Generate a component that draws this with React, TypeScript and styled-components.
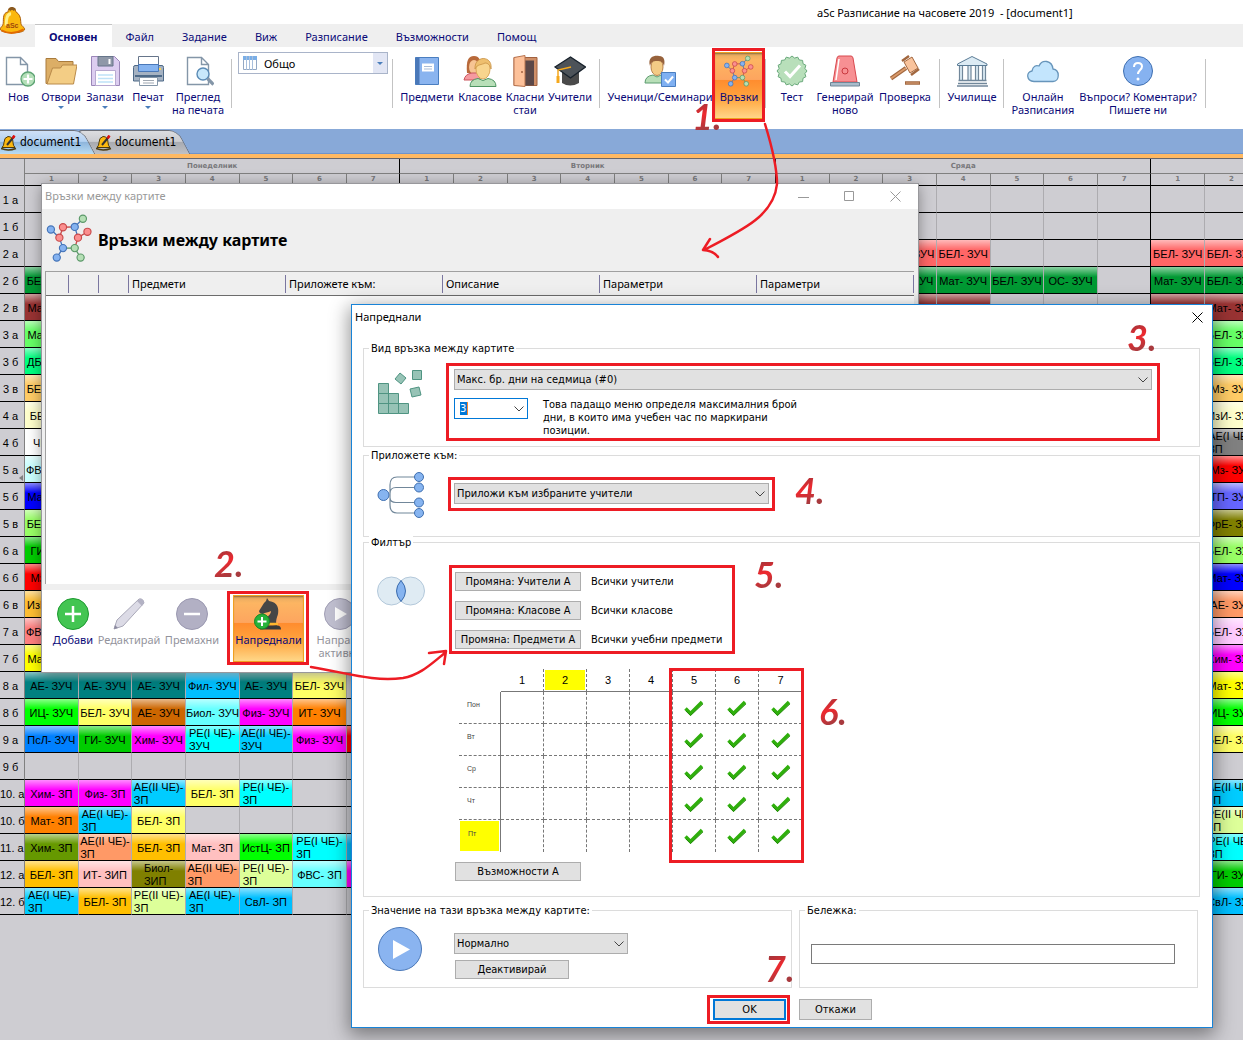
import React from "react";
import styled, { createGlobalStyle, css } from "styled-components";

const ui = `"Noto Sans", "Open Sans", sans-serif`;
const tahoma = `"DejaVu Sans Condensed", "DejaVu Sans", sans-serif`;
const arial = `"Liberation Sans", Arial, sans-serif`;
const navy = "#0a0a78";
const red = "#ed1c24";

const GlobalStyle = createGlobalStyle`
  *, *::before, *::after { box-sizing: border-box; }
  body { margin: 0; font-family: ${ui}; font-size: 11px; line-height: 13px; color: #000; }
  button, input, select { font: inherit; color: inherit; margin: 0; }
`;

/* ---------- application frame ---------- */

const Frame = styled.div`
  position: relative;
  display: flex;
  flex-direction: column;
  min-height: 100vh;
  overflow: hidden;
  background: #cecdd2;
`;

const TitleBar = styled.header`
  height: 24px;
  padding: 4px 0 0 817px;
  background: #fff;
  line-height: 18px;
  white-space: pre;
`;

const AppLogo = styled.span`
  position: absolute;
  left: 0;
  top: 7px;
`;

const MenuBar = styled.nav`
  display: flex;
  height: 23px;
  padding-left: 35px;
  background: #efefef;
  color: ${navy};
`;

const MenuTab = styled.button<{ $active?: boolean }>`
  border: 0;
  border-top: 1px solid ${(p) => (p.$active ? "#c4c4c4" : "transparent")};
  padding: 0 14px;
  background: ${(p) => (p.$active ? "#fff" : "transparent")};
  font-weight: ${(p) => (p.$active ? 700 : 400)};
  white-space: nowrap;
`;

const Ribbon = styled.div`
  display: flex;
  height: 82px;
  background: #fff;
  color: ${navy};
`;

const Divider = styled.span<{ $w: number }>`
  flex: none;
  width: ${(p) => p.$w}px;
  height: 49px;
  margin-top: 12px;
  background: linear-gradient(#c3c3c3, #c3c3c3) center / 1px 100% no-repeat;
`;

const pressed = css`
  background: linear-gradient(#e0a860, #fdb562 12%, #fda55f 41%, #ff8c2e 42%, #ffa640 70%, #ffd98c);
  box-shadow: inset 0 0 0 1px #f0a020, inset 0 2px 2px #8a6a3c;
`;

const ToolButton = styled.button<{ $w: number; $pressed?: boolean; $dim?: boolean }>`
  flex: none;
  display: flex;
  flex-direction: column;
  align-items: center;
  gap: 3px;
  width: ${(p) => p.$w}px;
  height: 67px;
  margin: 5px 0 0;
  padding: 3px 0 0;
  border: 0;
  background: none;
  color: ${(p) => (p.$dim ? "#93939c" : navy)};
  text-align: center;
  white-space: pre;
  svg { flex: none; display: block; }
  ${(p) => p.$pressed && pressed}
`;

const DropMark = styled.i`
  border: 3px solid transparent;
  border-top-color: #4a7ebb;
`;

const ViewPicker = styled.label`
  flex: none;
  display: flex;
  align-items: center;
  width: 150px;
  height: 22px;
  margin-top: 5px;
  padding-left: 4px;
  border: 1px solid #a9b4c9;
  background: linear-gradient(90deg, #fff 134px, #e2e6f4 134px);
  color: #000;
`;

const ViewSelect = styled.select`
  flex: 1;
  height: 20px;
  padding: 0 0 0 7px;
  border: 0;
  outline: 0;
  appearance: none;
  background: none;
`;

const PickerMark = styled(DropMark)`
  margin: 3px 4px 0 0;
`;

const DocStrip = styled.div`
  display: flex;
  height: 30px;
  border-bottom: 1px solid #66666c;
  background: linear-gradient(#88a9d8 24px, #6d93cc 24px 25px, #ffb962 25px);
  font-family: ${tahoma};
  font-size: 12px;
`;

const DocTab = styled.button<{ $active?: boolean }>`
  position: relative;
  z-index: ${(p) => (p.$active ? 2 : 1)};
  display: flex;
  align-items: center;
  gap: 3px;
  width: 95px;
  height: 25px;
  padding: 2px 0 0 1px;
  border: 0;
  background: none;
  svg { flex: none; }
  &::before {
    content: "";
    position: absolute;
    z-index: -1;
    inset: 1px 6px 0 -12px;
    border: 1px solid #6c7079;
    border-bottom: 0;
    border-radius: 5px 9px 0 0;
    transform: skewX(28deg);
    background: ${(p) =>
      p.$active
        ? "linear-gradient(#cfe0f6, #b4d2f2 45%, #8fb6dc 50%, #b9dcf4)"
        : "linear-gradient(#dcdde0, #cbccd0 45%, #a9abb1 50%, #bfc1c6)"};
  }
`;

/* ---------- timetable ---------- */

const Timetable = styled.table`
  width: 1527px;
  table-layout: fixed;
  border-collapse: separate;
  border-spacing: 0;
  font-family: ${arial};
`;

const LabelCol = styled.col`
  width: 25px;
`;

const DayHead = styled.th`
  height: 15px;
  padding: 0;
  border-right: 1px solid #000;
  border-bottom: 1px solid #808080;
  color: #77777a;
  font: 700 7px/14px "DejaVu Sans", sans-serif;
`;

const HourHead = styled.th<{ $last?: boolean }>`
  height: 12px;
  padding: 0;
  border-right: 1px solid ${(p) => (p.$last ? "#000" : "#808080")};
  border-bottom: 1px solid #000;
  color: #77777a;
  font: 700 7px/11px "DejaVu Sans", sans-serif;
`;

const Corner = styled.th`
  padding: 0;
  border-right: 1px solid #808080;
  border-bottom: 1px solid #000;
`;

const ClassHead = styled.th<{ $mark?: boolean }>`
  position: relative;
  height: 27px;
  padding: 2px 3px 0 0;
  border-right: 1px solid #808080;
  border-bottom: 1px solid #000;
  font-size: 11px;
  font-weight: 400;
  white-space: nowrap;
  &::after {
    content: "";
    display: ${(p) => (p.$mark ? "block" : "none")};
    position: absolute;
    right: 1px;
    bottom: 1px;
    border: 3px solid transparent;
    border-right: 4px solid #808080;
    border-left: 0;
  }
`;

const Slot = styled.td<{ $fill?: string; $last?: boolean }>`
  height: 27px;
  padding: 0;
  overflow: hidden;
  border-right: 1px solid ${(p) => (p.$last ? "#000" : "#adacb0")};
  border-bottom: 1px solid #000;
  background: ${(p) =>
    p.$fill ? `linear-gradient(rgba(255,255,255,.55), rgba(255,255,255,0) 10px), ${p.$fill}` : "none"};
  text-align: center;
  white-space: pre;
`;

const SlotText = styled.span`
  display: inline-block;
  margin: 1px 0 -1px;
  vertical-align: middle;
  text-align: left;
`;

type Card = [string, string];
type Row = { name: string; mon?: (Card | null)[]; wed?: (Card | null)[]; thu?: (Card | null)[] };

const z = (s: string) => `${s}- ЗУЧ`;
const p = (s: string) => `${s}- ЗП`;
const zp = (s: string) => `${s}-\nЗП`;

const rows: Row[] = [
  { name: "1 а" },
  { name: "1 б" },
  {
    name: "2 а",
    wed: [null, null, [z("БЕЛ"), "#ff6666"], [z("БЕЛ"), "#ff6666"]],
    thu: [[z("БЕЛ"), "#ff6666"], [z("БЕЛ"), "#ff6666"]],
  },
  {
    name: "2 б",
    mon: [[z("БЕЛ"), "#009933"]],
    wed: [null, null, [z("Мат"), "#009933"], [z("Мат"), "#009933"], [z("БЕЛ"), "#009933"], [z("ОС"), "#009933"]],
    thu: [[z("Мат"), "#009933"], [z("БЕЛ"), "#009933"]],
  },
  {
    name: "2 в",
    mon: [[z("Мат"), "#993333"]],
    wed: [null, null, [z("Мат"), "#993333"], [z("Мат"), "#993333"]],
    thu: [[z("Мат"), "#993333"], [z("Мат"), "#993333"]],
  },
  { name: "3 а", mon: [[z("Мат"), "#66ff66"]], thu: [null, [z("БЕЛ"), "#66ff66"]] },
  { name: "3 б", mon: [[z("ДБТ"), "#00ff80"]], thu: [null, [z("БЕЛ"), "#00ff80"]] },
  { name: "3 в", mon: [[z("БЕЛ"), "#ffcc66"]], thu: [null, [z("Мз"), "#ffcc66"]] },
  { name: "4 а", mon: [[p("БЕЛ"), "#ffffcc"]], thu: [null, [z("ИзИ"), "#ffffcc"]] },
  { name: "4 б", mon: [[p("ЧП"), "#ffffff"]], thu: [null, [zp("АЕ(I ЧЕ)"), "#808080"]] },
  { name: "5 а", mon: [[z("ФВС"), "#ccffff"]], thu: [null, [z("Мз"), "#ff0000"]] },
  { name: "5 б", mon: [[z("Мат"), "#0000ff"]], thu: [null, [z("ТП"), "#6666ff"]] },
  { name: "5 в", mon: [[z("БЕЛ"), "#99ff66"]], thu: [null, [z("ФрЕ"), "#808000"]] },
  { name: "6 а", mon: [[z("ГИ"), "#00cc00"]], thu: [null, [z("БЕЛ"), "#99ff66"]] },
  { name: "6 б", mon: [[z("Мз"), "#ff0000"]], thu: [null, [z("Мат"), "#0000ff"]] },
  { name: "6 в", mon: [[z("ИзИ"), "#ffbf33"]], thu: [null, [z("АЕ"), "#ff9966"]] },
  { name: "7 а", mon: [[z("ФВС"), "#ff8080"]], thu: [null, [z("БЕЛ"), "#ffccff"]] },
  { name: "7 б", mon: [[z("Мат"), "#ffff00"]], thu: [null, [z("Хим"), "#ff00ff"]] },
  {
    name: "8 а",
    mon: [[z("АЕ"), "#008080"], [z("АЕ"), "#008080"], [z("АЕ"), "#008080"], [z("Фил"), "#00bfff"], [z("АЕ"), "#008080"], [z("БЕЛ"), "#ffff66"]],
    thu: [null, [z("Мат"), "#ffff00"]],
  },
  {
    name: "8 б",
    mon: [[z("ИЦ"), "#00ff00"], [z("БЕЛ"), "#ffff66"], [z("АЕ"), "#cc6600"], [z("Биол"), "#66ffff"], [z("Физ"), "#ff00ff"], [z("ИТ"), "#ff8000"]],
    thu: [null, [z("ИЦ"), "#00ff00"]],
  },
  {
    name: "9 а",
    mon: [[z("ПсЛ"), "#0080ff"], [z("ГИ"), "#00cc00"], [z("Хим"), "#ff00ff"], ["РЕ(I ЧЕ)-\nЗУЧ", "#00ffff"], ["АЕ(II ЧЕ)-\nЗУЧ", "#00ccff"], [z("Физ"), "#ff00ff"], [z("Мз"), "#ff0000"]],
    thu: [null, [z("БЕЛ"), "#ffff66"]],
  },
  { name: "9 б" },
  {
    name: "10. а",
    mon: [[p("Хим"), "#ff00ff"], [p("Физ"), "#ff00ff"], [zp("АЕ(II ЧЕ)"), "#00ccff"], [p("БЕЛ"), "#ffff66"], [zp("РЕ(I ЧЕ)"), "#00ffff"]],
    thu: [null, [zp("АЕ(II ЧЕ)"), "#00ccff"]],
  },
  {
    name: "10. б",
    mon: [[p("Мат"), "#ff8000"], [zp("АЕ(I ЧЕ)"), "#00ccff"], [p("БЕЛ"), "#ffff66"]],
    thu: [null, [zp("РЕ(II ЧЕ)"), "#ddff99"]],
  },
  {
    name: "11. а",
    mon: [[p("Хим"), "#669900"], [zp("АЕ(II ЧЕ)"), "#ff9966"], [p("БЕЛ"), "#ffbf00"], [p("Мат"), "#ffc0c0"], [p("ИстЦ"), "#00ff00"], [zp("РЕ(I ЧЕ)"), "#00ffff"], [p("СвЛ"), "#00bfff"]],
    thu: [null, [zp("РЕ(I ЧЕ)"), "#00ffff"]],
  },
  {
    name: "12. а",
    mon: [[p("БЕЛ"), "#ffbf00"], ["ИТ- ЗИП", "#ffc0c0"], ["Биол-\nЗИП", "#808000"], [zp("АЕ(II ЧЕ)"), "#ff9966"], [zp("РЕ(I ЧЕ)"), "#ddff99"], [p("ФВС"), "#66ffff"], [p("Физ"), "#ff00ff"]],
    thu: [null, [z("ГИ"), "#00cc00"]],
  },
  {
    name: "12. б",
    mon: [[zp("АЕ(I ЧЕ)"), "#00ccff"], [p("БЕЛ"), "#ffbf00"], [zp("РЕ(II ЧЕ)"), "#ddff99"], [zp("АЕ(I ЧЕ)"), "#00ccff"], [p("СвЛ"), "#00bfff"]],
    thu: [null, [z("СвЛ"), "#00bfff"]],
  },
];

const days = ["Понеделник", "Вторник", "Сряда", "Четвъртък"];
const hours = [1, 2, 3, 4, 5, 6, 7];

/* ---------- windows ---------- */

const LinksWindow = styled.section`
  position: absolute;
  left: 42px;
  top: 184px;
  width: 876px;
  background: #efefef;
  box-shadow: 0 0 0 1px #98989c, 0 2px 14px rgba(0, 0, 0, 0.4);
`;

const WindowTitle = styled.div<{ $inactive?: boolean }>`
  display: flex;
  align-items: center;
  height: 25px;
  padding: 0 ${(p) => (p.$inactive ? 15 : 7)}px 0 3px;
  background: #fff;
  color: ${(p) => (p.$inactive ? "#999" : "#000")};
`;

const WindowName = styled.span`
  flex: 1;
  padding-bottom: 2px;
`;

const WindowButton = styled.button`
  display: grid;
  place-items: center;
  width: 16px;
  height: 16px;
  margin-left: 30px;
  padding: 0;
  border: 0;
  background: none;
`;

const LinksHeader = styled.div`
  display: flex;
  align-items: center;
  gap: 5px;
  height: 62px;
  padding: 0 0 4px 4px;
`;

const LinksHeading = styled.h1`
  margin: 0;
  padding-top: 4px;
  font-size: 16px;
  line-height: 20px;
`;

const LinksTable = styled.table`
  width: 869px;
  margin-left: 3px;
  table-layout: fixed;
  border-collapse: separate;
  border-spacing: 0;
  border: 1px solid #a0a0a0;
  border-width: 1px 0 0 1px;
`;

const LinksTh = styled.th<{ $w?: number }>`
  width: ${(p) => p.$w ?? 157}px;
  height: 24px;
  padding: 0 0 0 3px;
  border-bottom: 1px solid #6c6c6c;
  background: linear-gradient(#7a76a0, #7a76a0) right center / 1px 18px no-repeat, #efefef;
  font-weight: 400;
  text-align: left;
`;

const LinksEmpty = styled.td`
  height: 288px;
  background: #fff;
`;

const LinksTools = styled.div`
  display: flex;
  height: 82px;
  margin-top: 6px;
  padding-left: 7px;
  overflow: hidden;
  background: #fff;
`;

const AdvancedWindow = styled.section`
  position: absolute;
  left: 351px;
  top: 304px;
  width: 862px;
  border: 1px solid #1883d7;
  background: #fff;
  box-shadow: 0 5px 18px 2px rgba(0, 0, 0, 0.42);
`;

const AdvancedBody = styled.form`
  display: flex;
  flex-direction: column;
  padding: 12px 12px 7px 11px;
  font-family: ${tahoma};
`;

const Group = styled.fieldset<{ $gap?: number }>`
  min-width: 0;
  margin: ${(p) => p.$gap ?? 0}px 0 0;
  padding: 0;
  border: 1px solid #dcdcdc;
`;

const Legend = styled.legend`
  margin-left: 5px;
  padding: 0 2px;
  background: #fff;
`;

const GroupBody = styled.div<{ $top: number; $bottom: number }>`
  display: grid;
  grid-template-columns: 77px 1fr;
  padding: ${(p) => p.$top}px 47px ${(p) => p.$bottom}px 13px;
`;

const Stack = styled.div<{ $gap: number; $top?: number }>`
  display: flex;
  flex-direction: column;
  align-items: flex-start;
  gap: ${(p) => p.$gap}px;
  padding-top: ${(p) => p.$top ?? 0}px;
`;

const Line = styled.div<{ $gap: number }>`
  display: flex;
  gap: ${(p) => p.$gap}px;
`;

const SelectBox = styled.div<{ $w?: number; $edit?: boolean }>`
  display: flex;
  align-items: center;
  width: ${(p) => (p.$w ? `${p.$w}px` : "100%")};
  height: 21px;
  padding: 0 3px 0 2px;
  border: 1px solid ${(p) => (p.$edit ? "#0078d7" : "#adadad")};
  background: ${(p) => (p.$edit ? "#fff" : "#e1e1e1")};
  svg { flex: none; }
`;

const SelectField = styled.select`
  flex: 1;
  min-width: 0;
  height: 19px;
  padding: 0;
  border: 0;
  outline: 0;
  appearance: none;
  background: none;
`;

const LimitInput = styled.input`
  width: 8px;
  height: 13px;
  margin: 0 auto 0 3px;
  padding: 0;
  border: 0;
  border-right: 1px solid #ff8728;
  outline: 0;
  background: #0078d7;
  color: #fff;
`;

const Hint = styled.p`
  width: 262px;
  margin: 0;
`;

const PushButton = styled.button<{ $w: number; $default?: boolean }>`
  width: ${(p) => p.$w}px;
  height: ${(p) => (p.$w < 80 ? 21 : 19)}px;
  padding: 0;
  border: ${(p) => (p.$default ? "2px solid #0078d7" : "1px solid #adadad")};
  background: #e1e1e1;
`;

const FilterLine = styled.div`
  display: flex;
  align-items: center;
  gap: 10px;
  padding-left: 1px;
`;

const Availability = styled.table`
  width: 343px;
  margin: 20px 0 0 5px;
  table-layout: fixed;
  border-collapse: separate;
  border-spacing: 0;
  font-family: ${arial};
`;

const AvCorner = styled.td`
  width: 42px;
  height: 23px;
  padding: 0;
`;

const yellow = css`
  background: #ff0 content-box;
`;

const AvHour = styled.th<{ $on?: boolean; $last?: boolean }>`
  height: 23px;
  padding: 1px;
  border-right: ${(p) => (p.$last ? "0" : "1px dashed #777")};
  border-bottom: 1px solid #777;
  font-size: 11px;
  font-weight: 400;
  ${(p) => p.$on && yellow}
`;

const AvDay = styled.th<{ $on?: boolean; $last?: boolean }>`
  height: 32px;
  padding: ${(p) => (p.$on ? 1 : 0)}px;
  border-right: 1px solid #777;
  border-bottom: ${(p) => (p.$last ? "0" : "1px dashed #777")};
  color: #444;
  font-size: 7px;
  font-weight: 400;
  line-height: 9px;
  text-align: left;
  vertical-align: top;
  ${(p) => p.$on && yellow}
`;

const DayName = styled.span`
  display: block;
  padding: 8px 0 0 8px;
`;

const AvCell = styled.td<{ $bottom?: boolean; $right?: boolean }>`
  height: 32px;
  padding: 0;
  border-right: ${(p) => (p.$right ? "0" : "1px dashed #777")};
  border-bottom: ${(p) => (p.$bottom ? "0" : "1px dashed #777")};
  text-align: center;
  svg { display: block; margin: 0 auto; }
`;

const AvFooter = styled.div`
  padding: 10px 0 0 1px;
`;

const TwoColumns = styled.div<{ $gap: number }>`
  display: grid;
  grid-template-columns: 429px 1fr;
  column-gap: 7px;
  margin-top: ${(p) => p.$gap}px;
  padding-right: 2px;
`;

const NoteInput = styled.input`
  display: block;
  width: calc(100% - 33px);
  height: 20px;
  margin: 27px 0 0 11px;
  border: 1px solid #7a7a7a;
  background: #fff;
`;

const RightSide = styled.div`
  display: flex;
  justify-content: flex-end;
  padding-right: 6px;
`;

/* ---------- hand-drawn marks ---------- */

const Marks = styled.div`
  position: absolute;
  inset: 0;
  pointer-events: none;
`;

const MarkBox = styled.span<{ $x: number; $y: number; $w: number; $h: number }>`
  position: absolute;
  left: ${(p) => p.$x}px;
  top: ${(p) => p.$y}px;
  width: ${(p) => p.$w}px;
  height: ${(p) => p.$h}px;
  border: 3px solid ${red};
`;

const MarkNumber = styled.span<{ $x: number; $y: number }>`
  position: absolute;
  left: ${(p) => p.$x}px;
  top: ${(p) => p.$y}px;
  background: linear-gradient(160deg, #a4353a 20%, #f0282e 45%, #a83a3e 75%);
  background-clip: text;
  color: transparent;
  font: italic 700 36px/40px Lato, sans-serif;
`;

const boxes = [
  [712, 48, 53, 74],
  [227, 591, 82, 74],
  [446, 363, 714, 78],
  [448, 477, 327, 34],
  [449, 565, 286, 89],
  [669, 668, 135, 195],
  [707, 995, 83, 29],
];

const numbers: [string, number, number][] = [
  ["1.", 692, 96],
  ["2.", 214, 543],
  ["3.", 1127, 317],
  ["4.", 795, 470],
  ["5.", 754, 554],
  ["6.", 819, 691],
  ["7.", 765, 948],
];

/* ---------- icons ---------- */

const Svg = ({ w = 32, h = 32, box, children }: { w?: number; h?: number; box?: string; children: React.ReactNode }) => (
  <svg width={w} height={h} viewBox={box ?? `0 0 ${w} ${h}`} fill="none" aria-hidden="true">
    {children}
  </svg>
);

const IconNew = () => (
  <Svg>
    <path d="M3.500 2.500h14l7 7v20h-21zM17.500 2.500v7h7" fill="#fff" stroke="#8496a8" strokeWidth="1.4" />
    <circle cx="25" cy="24" r="7" fill="#b4dfb8" stroke="#5ea474" strokeWidth="1.3" />
    <path d="M25 19.500v9M20.500 24h9" stroke="#fff" strokeWidth="2.200" />
  </Svg>
);

const IconOpen = () => (
  <Svg>
    <path d="M1 28.500V3.500h10l2.500 3H28v22z" fill="#dcae66" stroke="#a97b3c" />
    <path d="M2 29 7.500 13h8l2-3H32l-3.500 19z" fill="#f3cd85" stroke="#b98a4a" />
  </Svg>
);

const IconSave = () => (
  <Svg>
    <path d="M2.500 1.500h23l5 5v24h-28z" fill="#dccdf0" stroke="#9a86b8" />
    <path d="M9 1.500h15v9.500H9z" fill="#8f98a8" stroke="#66758a" />
    <path d="M19.500 4h2v5h-2z" fill="#fff" />
    <path d="M6.500 15.500h20v15h-20z" fill="#fff" stroke="#b7a9d0" />
    <path d="M9 20h15M9 23.500h15M9 27h15" stroke="#bfe2f7" strokeWidth="1.500" />
  </Svg>
);

const IconPrint = () => (
  <Svg>
    <path d="M6.500 13V1.500h20V13" fill="#fff" stroke="#66758a" />
    <path d="M3 10.500h27q1.500 0 1.500 2V26h-30V12.500q0-2 1.500-2z" fill="#a5b2c2" stroke="#4e6a88" />
    <path d="M6.500 9.500h20v7h-20z" fill="#86b4f0" stroke="#4a78b8" />
    <path d="M27 13h2v2h-2z" fill="#ffd34e" />
    <path d="M3 21h27" stroke="#4e6a88" strokeWidth="2" />
    <path d="M7.500 22.500h18v8h-18z" fill="#fff" stroke="#8496a8" />
    <path d="M11 25.500h11M11 28h11" stroke="#a0a8b2" />
  </Svg>
);

const IconPreview = () => (
  <Svg>
    <path d="M5.500 2.500h14l7 7v20h-21zM19.500 2.500v7h7" fill="#fff" stroke="#8496a8" strokeWidth="1.4" />
    <circle cx="21" cy="19" r="6" fill="#c8e8fb" stroke="#5b8bb5" strokeWidth="1.400" />
    <path d="m25.500 23.500 6 6" stroke="#8496a8" strokeWidth="3.200" />
  </Svg>
);

const IconGrid = () => (
  <Svg w={14} h={14}>
    <path d="M.5.5h13v13H.5z" fill="#fff" stroke="#93a8c4" />
    <path d="M0 0h14v4H0z" fill="#7aaee6" />
    <path d="M3.500 0v14M6.500 0v14M9.500 0v14" stroke="#a8bfdc" />
  </Svg>
);

const IconBook = () => (
  <Svg>
    <path d="M4.500 2.500h23v27h-23z" fill="#8ab4ef" stroke="#4a7ec0" />
    <path d="M4.500 2.500h4v27h-4z" fill="#4a78b8" />
    <path d="M11 8.500h12v8H11z" fill="#fff" />
    <path d="M13 11.500h8M13 14h8" stroke="#a9bcd8" />
  </Svg>
);

const IconPupils = () => (
  <Svg w={34}>
    <path d="M4 18C3 6 5 1 11 1s8 6 7 17z" fill="#b8693a" />
    <ellipse cx="11" cy="12" rx="5" ry="7" fill="#f6c493" />
    <path d="M1 25q1-6 8-7h8v7z" fill="#f59aa0" stroke="#c9555c" />
    <ellipse cx="20" cy="14" rx="7" ry="10" fill="#f8d58e" stroke="#dca85a" />
    <path d="M12 14C11 0 30 0 28 14c-1-4-3-6-6-6-3 2-8 1-10 6z" fill="#eebf6e" stroke="#c99346" strokeWidth=".8" />
    <path d="M7 31.500q0-7 8-8l5 2 5-2q8 1 8 8z" fill="#b8dfb8" stroke="#4e9462" />
  </Svg>
);

const IconDoor = () => (
  <Svg>
    <path d="M5 2.500h23v28H5z" fill="#cf8f68" stroke="#a2613f" />
    <path d="M11 5.500h14v25H11z" fill="#5b4848" />
    <path d="M5 2.500 16 .5v31l-11-1z" fill="#fdc19a" stroke="#b87450" />
    <circle cx="13" cy="17" r="1" fill="#a2613f" />
  </Svg>
);

const IconCap = () => (
  <Svg>
    <path d="M8 16v12q8 5 17 0V16z" fill="#4a4a4a" />
    <path d="M1 12 16.500 2 31.500 12 16.500 23z" fill="#4d5359" stroke="#17212b" strokeWidth="1.300" />
    <path d="M17 12 4 15v9" stroke="#f5a81c" strokeWidth="1.500" />
    <path d="M4 21v7" stroke="#f5a81c" strokeWidth="3" />
  </Svg>
);

const IconStudent = () => (
  <Svg>
    <path d="M1 28q0-7 8-8l4 2 4-2q5 1 6 8z" fill="#b8dfb8" stroke="#5d9c70" />
    <ellipse cx="13" cy="12" rx="6" ry="8.500" fill="#f3cb85" stroke="#b9824a" />
    <path d="M6 11C3 1 12 0 15 1c6 0 6 6 5 10-1-4-3-5-7-5s-6 1-7 5z" fill="#97623c" />
    <path d="M17.500 17.500h14v14h-14z" fill="#7fb0f2" stroke="#4a7ec0" />
    <path d="m21 24.500 3 3 5-6" stroke="#fff" strokeWidth="2" />
  </Svg>
);

const blue = ["#84b2f0", "#4373b8"];
const pink = ["#fb8f8f", "#c84a4a"];
const green = ["#b5dfb5", "#5a9868"];
const nodes: [number, number, string[]][] = [
  [153, 237, blue], [179, 262, pink], [190, 230, pink], [226, 229, blue], [251, 204, green], [236, 262, pink],
  [265, 244, pink], [226, 294, green], [244, 323, green], [190, 294, blue], [171, 323, blue],
];
const edges = [[0, 1], [1, 2], [2, 3], [3, 4], [3, 5], [5, 6], [5, 7], [7, 8], [7, 9], [9, 10], [9, 1]];

const IconLinks = ({ w, h }: { w: number; h: number }) => (
  <Svg w={w} h={h} box="138 188 144 150">
    {edges.map(([a, b]) => (
      <path key={`${a}-${b}`} d={`M${nodes[a][0]} ${nodes[a][1]}L${nodes[b][0]} ${nodes[b][1]}`} stroke={nodes[a][2][1]} strokeWidth="4" />
    ))}
    {nodes.map(([x, y, c]) => (
      <circle key={`${x}-${y}`} cx={x} cy={y} r="11" fill={c[0]} stroke={c[1]} strokeWidth="3.500" />
    ))}
  </Svg>
);

const scallops = Array.from({ length: 32 }, (_, i) => {
  const r = i % 2 ? 13.2 : 15;
  const a = (i * Math.PI) / 16;
  return `${(16 + r * Math.cos(a)).toFixed(1)},${(16 + r * Math.sin(a)).toFixed(1)}`;
}).join(" ");

const IconTest = () => (
  <Svg>
    <polygon points={scallops} fill="#b8dfba" stroke="#6aa97c" strokeLinejoin="round" />
    <path d="m9 16.500 5 5 10-11" stroke="#fff" strokeWidth="3" />
  </Svg>
);

const IconSiren = () => (
  <Svg>
    <path d="M4 27 8 3q.5-2 2-2h12q1.500 0 2 2l4 24z" fill="#f79093" stroke="#d8484e" />
    <path d="m10 4-3 21" stroke="#fff" strokeWidth="1.500" />
    <circle cx="16" cy="16" r="3" stroke="#c9393f" />
    <path d="M1.500 27.500h29v3.500h-29z" fill="#a9bccb" stroke="#6f8798" />
  </Svg>
);

const IconGavel = () => (
  <Svg>
    <path d="M17 13 2 23.500" stroke="#a2673f" strokeWidth="4" />
    <path d="M17 13 2 23.500" stroke="#d99a6b" strokeWidth="1.800" />
    <path d="m15 7 8-5 6 11-8 5z" fill="#f9c39c" stroke="#a2673f" />
    <path d="m13 6 7-5M22 20l8-6" stroke="#a2673f" strokeWidth="2.500" />
    <path d="M16 28h15" stroke="#a2673f" strokeWidth="3.500" />
    <path d="M17 28h13" stroke="#dda57c" />
  </Svg>
);

const IconSchool = () => (
  <Svg>
    <path d="M1.500 9 16 1.500 31 9v1.500H1.500z" fill="#dcebf4" stroke="#5b7c96" />
    <path d="M5 11v14M13.500 11v14M21 11v14M28 11v14" stroke="#dcebf4" strokeWidth="3" />
    <path d="M3.500 11v14M6.500 11v14M12 11v14M15 11v14M19.500 11v14M22.500 11v14M26.500 11v14M29.500 11v14" stroke="#71879a" strokeWidth="1.200" />
    <path d="M2.500 25.500h28M2 28.500h29M1 31h31" stroke="#71879a" strokeWidth="1.500" />
  </Svg>
);

const IconCloud = () => (
  <Svg>
    <path d="M7 26.500C-1 26-1 17 5 16c1-5 4-6 7-5 3-7 13-6 14 3 7 1 7 12 0 12.500z" fill="#c3e5fd" stroke="#6795bb" strokeWidth="1.300" />
  </Svg>
);

const IconHelp = () => (
  <Svg>
    <circle cx="16" cy="16" r="14.500" fill="#86b2f0" stroke="#3f6fb0" />
    <path d="M12 12q0-4 4-4t4 3.500c0 3.500-4 3.500-4 7.500" stroke="#fff" strokeWidth="2" />
    <circle cx="16" cy="24" r="1.500" fill="#fff" />
  </Svg>
);

const IconBell = ({ s }: { s: number }) => (
  <Svg w={s} h={s + 4} box="0 0 26 31">
    <path d="M12 1q4 0 4 4 5 3 5 10c0 6 4 5 4 8 0 5-25 5-25 0 0-3 3-2 3-8 0-7 1-9 5-10 0-4 2-4 4-4z" fill="#fbb80e" stroke="#a85a08" />
    <path d="M6 19c0-8 1-12 5-12" stroke="#fff08a" strokeWidth="3" />
    <path d="M1 24q11 6 23-1" stroke="#e26b00" strokeWidth="2" />
    <path d="M9 3q3-3 6 0" stroke="#8a5a20" strokeWidth="3" />
  </Svg>
);

const LogoText = styled.span`
  position: absolute;
  left: 6px;
  top: 15px;
  color: #a0480a;
  font: 700 7px/8px ${arial};
`;

const IconDocBell = () => (
  <Svg w={16} h={16}>
    <path d="M7 1.500q5 0 5 6 0 3 2 5H1q2-2 2-5 0-5 4-6z" fill="#fbb80e" stroke="#4a3a10" />
    <path d="M0 13.500q7 3 15 0" stroke="#4a3a10" strokeWidth="1.500" />
    <path d="m6 10 7-8.500" stroke="#333" strokeWidth="2" />
    <path d="m11.500 3.500 2-3" stroke="#e01010" strokeWidth="2.500" />
  </Svg>
);

const IconDisc = ({ fill, line, d, solid }: { fill: string; line: string; d: string; solid?: boolean }) => (
  <Svg>
    <circle cx="16" cy="16" r="15.500" fill={fill} stroke={line} />
    <path d={d} fill={solid ? "#fff" : "none"} stroke={solid ? "none" : "#fff"} strokeWidth="2.500" />
  </Svg>
);

const IconPencil = () => (
  <Svg>
    <path d="m1 31 3-9L26 1q4-1 5 4L10 28z" fill="#dcdbe6" stroke="#a9a8b8" />
    <path d="m24 3 3-2q4 0 4 4l-2 3z" fill="#b3b2c4" />
    <path d="m1 31 1-4 3 3z" fill="#8c8ba0" />
  </Svg>
);

const IconKnight = () => (
  <Svg>
    <path d="M12 25c-1-6 6-7 6-12-3 2-6 1-8 3-2 0-4-1-4-3l5-8 2-2 1-3 2 3c9 1 10 8 9 13-1 4-3 7-1 12z" fill="#464646" />
    <path d="M9 26h16" stroke="#ffb62e" strokeWidth="2.500" />
    <path d="M7 31.500q0-4 3-4h14q4 0 4 4z" fill="#3a3a3a" />
    <circle cx="9" cy="23.500" r="7.500" fill="#27b23a" stroke="#128a24" />
    <path d="M9 19v9M4.500 23.500h9" stroke="#fff" strokeWidth="2" />
  </Svg>
);

const IconBlocks = () => (
  <Svg w={46} h={46}>
    <g fill="#97c3b6" stroke="#4f9482">
      <path d="M1.500 14.500h10v10h-10zM1.500 24.500h10v10h-10zM11.500 24.500h10v10h-10zM1.500 34.500h10v10h-10zM11.500 34.500h10v10h-10zM21.500 34.500h10v10h-10zM35.500 1.500h9v9h-9z" />
      <path d="m23 4 6 5-5 6-6-5zM33 20l9-2 2 8-9 2z" />
    </g>
  </Svg>
);

const IconTree = () => (
  <Svg w={48} h={46}>
    <path d="M42 5H20q-7 0-7 8v20q0 8 7 8h22M42 15.500H19q-6 0-6 6v4q0 5 6 5h23" stroke="#71879a" strokeWidth="1.200" />
    <g fill="#86b4f0" stroke="#3f6fb0">
      <circle cx="6.500" cy="23" r="5.500" />
      <circle cx="42" cy="5" r="4.500" />
      <circle cx="42" cy="15.500" r="4.500" />
      <circle cx="42" cy="30.500" r="4.500" />
      <circle cx="42" cy="41" r="4.500" />
    </g>
  </Svg>
);

const IconVenn = () => (
  <Svg w={48} h={30}>
    <g fill="#dfebf3">
      <circle cx="14.500" cy="15" r="14" />
      <circle cx="33.500" cy="15" r="14" />
    </g>
    <g stroke="#b3c8da">
      <circle cx="14.500" cy="15" r="14" />
      <circle cx="33.500" cy="15" r="14" />
    </g>
    <path d="M24 4.500q9 10.500 0 21-9-10.500 0-21z" fill="#86b4f0" stroke="#3f6fb0" />
  </Svg>
);

const IconPlay = () => (
  <Svg w={46} h={44}>
    <circle cx="23" cy="22" r="21.500" fill="#8ab4f0" stroke="#4a78b8" />
    <path d="M16 13v19l17-9.500z" fill="#fff" />
  </Svg>
);

const Chevron = () => (
  <Svg w={10} h={6}>
    <path d="m.5.500 4.500 4.500L9.500.5" stroke="#444" />
  </Svg>
);

const Tick = () => (
  <Svg w={20} h={16}>
    <path d="m1.500 8.500 5 5L18 2" stroke="#2faf0c" strokeWidth="3.500" />
    <path d="m2 11 4.500 4.500L19 4" stroke="#1d7f08" strokeWidth=".8" />
  </Svg>
);

const IconSlot = styled.span<{ $top?: number }>`
  padding-top: ${(p) => p.$top ?? 0}px;
  svg { display: block; }
`;

/* ---------- composition ---------- */

const Tool = ({ w, icon, label, drop, on, dim }: { w: number; icon: React.ReactNode; label: string; drop?: boolean; on?: boolean; dim?: boolean }) => (
  <ToolButton type="button" $w={w} $pressed={on} $dim={dim}>
    {icon}
    <span>{label}</span>
    {drop && <DropMark />}
  </ToolButton>
);

const Picker = ({ w, value, label }: { w?: number; value: string; label: string }) => (
  <SelectBox $w={w}>
    <SelectField aria-label={label}>
      <option>{value}</option>
    </SelectField>
    <Chevron />
  </SelectBox>
);

const filters = [
  ["Промяна: Учители А", "Всички учители"],
  ["Промяна: Класове А", "Всички класове"],
  ["Промяна: Предмети А", "Всички учебни предмети"],
];

const weekdays = ["Пон", "Вт", "Ср", "Чт", "Пт"];

export default function App() {
  return (
    <Frame>
      <GlobalStyle />
      <TitleBar>{"aSc Разписание на часовете 2019  - [document1]"}</TitleBar>
      <MenuBar>
        <MenuTab $active>Основен</MenuTab>
        {["Файл", "Задание", "Виж", "Разписание", "Възможности", "Помощ"].map((t) => (
          <MenuTab key={t}>{t}</MenuTab>
        ))}
      </MenuBar>
      <AppLogo>
        <IconBell s={26} />
        <LogoText>aSc</LogoText>
      </AppLogo>

      <Ribbon>
        <Tool w={37} icon={<IconNew />} label="Нов" />
        <Tool w={48} icon={<IconOpen />} label="Отвори" drop />
        <Tool w={40} icon={<IconSave />} label="Запази" drop />
        <Tool w={46} icon={<IconPrint />} label="Печат" drop />
        <Tool w={54} icon={<IconPreview />} label={"Преглед\nна печата"} />
        <Divider $w={13} />
        <ViewPicker>
          <IconGrid />
          <ViewSelect aria-label="Изглед">
            <option>Общо</option>
          </ViewSelect>
          <PickerMark />
        </ViewPicker>
        <Divider $w={9} />
        <Tool w={60} icon={<IconBook />} label="Предмети" />
        <Tool w={46} icon={<IconPupils />} label="Класове" />
        <Tool w={44} icon={<IconDoor />} label={"Класни\nстаи"} />
        <Tool w={46} icon={<IconCap />} label="Учители" />
        <Divider $w={13} />
        <Tool w={108} icon={<IconStudent />} label="Ученици/Семинари" />
        <Tool w={50} icon={<IconLinks w={32} h={32} />} label="Връзки" on />
        <Divider $w={3} />
        <Tool w={50} icon={<IconTest />} label="Тест" />
        <Tool w={56} icon={<IconSiren />} label={"Генерирай\nново"} />
        <Tool w={64} icon={<IconGavel />} label="Проверка" />
        <Divider $w={5} />
        <Tool w={60} icon={<IconSchool />} label="Училище" />
        <Divider $w={3} />
        <Tool w={76} icon={<IconCloud />} label={"Онлайн\nРазписания"} />
        <Tool w={114} icon={<IconHelp />} label={"Въпроси? Коментари?\nПишете ни"} />
        <Divider $w={21} />
      </Ribbon>

      <DocStrip>
        <DocTab $active>
          <IconDocBell />
          document1
        </DocTab>
        <DocTab>
          <IconDocBell />
          document1
        </DocTab>
      </DocStrip>

      <Timetable>
        <colgroup>
          <LabelCol />
          {days.map((d) => hours.map((h) => <col key={d + h} />))}
        </colgroup>
        <thead>
          <tr>
            <Corner rowSpan={2} />
            {days.map((d) => (
              <DayHead key={d} colSpan={7}>{d}</DayHead>
            ))}
          </tr>
          <tr>
            {days.map((d) => hours.map((h) => <HourHead key={d + h} $last={h === 7}>{h}</HourHead>))}
          </tr>
        </thead>
        <tbody>
          {rows.map((r) => (
            <tr key={r.name}>
              <ClassHead $mark={r.name === "5 а"}>{r.name}</ClassHead>
              {[r.mon, undefined, r.wed, r.thu].map((day, d) =>
                hours.map((h) => {
                  const card = day?.[h - 1];
                  return (
                    <Slot key={`${d}-${h}`} $fill={card?.[1]} $last={h === 7}>
                      {card && <SlotText>{card[0]}</SlotText>}
                    </Slot>
                  );
                })
              )}
            </tr>
          ))}
        </tbody>
      </Timetable>

      <LinksWindow>
        <WindowTitle $inactive>
          <WindowName>Връзки между картите</WindowName>
          <WindowButton aria-label="Минимизирай">
            <Svg w={12} h={12}><path d="M1 6.500h11" stroke="#999" /></Svg>
          </WindowButton>
          <WindowButton aria-label="Максимизирай">
            <Svg w={11} h={11}><path d="M.5.5h9v9h-9z" stroke="#999" /></Svg>
          </WindowButton>
          <WindowButton aria-label="Затвори">
            <Svg w={11} h={11}><path d="m.5.5 10 10m0-10-10 10" stroke="#999" /></Svg>
          </WindowButton>
        </WindowTitle>
        <LinksHeader>
          <IconLinks w={47} h={50} />
          <LinksHeading>Връзки между картите</LinksHeading>
        </LinksHeader>
        <LinksTable>
          <thead>
            <tr>
              <LinksTh $w={23} />
              <LinksTh $w={30} />
              <LinksTh $w={30} />
              <LinksTh>Предмети</LinksTh>
              <LinksTh>Приложете към:</LinksTh>
              <LinksTh>Описание</LinksTh>
              <LinksTh>Параметри</LinksTh>
              <LinksTh>Параметри</LinksTh>
            </tr>
          </thead>
          <tbody>
            <tr>
              <LinksEmpty colSpan={8} />
            </tr>
          </tbody>
        </LinksTable>
        <LinksTools>
          <Tool w={48} icon={<IconDisc fill="#43c552" line="#1d9a30" d="M16 8v16M8 16h16" />} label="Добави" />
          <Tool w={64} dim icon={<IconPencil />} label="Редактирай" />
          <Tool w={62} dim icon={<IconDisc fill="#b2b0c4" line="#9a98b0" d="M8 16h16" />} label="Премахни" />
          <Divider $w={10} />
          <Tool w={71} on icon={<IconKnight />} label="Напреднали" />
          <Tool w={72} dim icon={<IconDisc fill="#c0bfd0" line="#a09eb4" d="M11 9v14l12-7z" solid />} label={"Направи\nактивна"} />
        </LinksTools>
      </LinksWindow>

      <AdvancedWindow>
        <WindowTitle>
          <WindowName>Напреднали</WindowName>
          <WindowButton aria-label="Затвори">
            <Svg w={11} h={11}><path d="m.5.5 10 10m0-10-10 10" stroke="#000" /></Svg>
          </WindowButton>
        </WindowTitle>
        <AdvancedBody>
          <Group>
            <Legend>Вид връзка между картите</Legend>
            <GroupBody $top={14} $bottom={9}>
              <IconSlot><IconBlocks /></IconSlot>
              <Stack $gap={8}>
                <Picker value="Макс. бр. дни на седмица (#0)" label="Вид връзка" />
                <Line $gap={15}>
                  <SelectBox $w={74} $edit>
                    <LimitInput aria-label="Брой дни" defaultValue="3" />
                    <Chevron />
                  </SelectBox>
                  <Hint>Това падащо меню определя максималния брой дни, в които има учебен час по маркирани позиции.</Hint>
                </Line>
              </Stack>
            </GroupBody>
          </Group>

          <Group $gap={2}>
            <Legend>Приложете към:</Legend>
            <GroupBody $top={10} $bottom={18}>
              <IconSlot><IconTree /></IconSlot>
              <Stack $gap={0} $top={11}>
                <Picker w={315} value="Приложи към избраните учители" label="Приложете към" />
              </Stack>
            </GroupBody>
          </Group>

          <Group $gap={-1}>
            <Legend>Филтър</Legend>
            <GroupBody $top={23} $bottom={15}>
              <IconSlot $top={4}><IconVenn /></IconSlot>
              <div>
                <Stack $gap={10}>
                  {filters.map(([button, text]) => (
                    <FilterLine key={button}>
                      <PushButton type="button" $w={126}>{button}</PushButton>
                      <span>{text}</span>
                    </FilterLine>
                  ))}
                </Stack>
                <Availability>
                  <thead>
                    <tr>
                      <AvCorner />
                      {hours.map((h) => (
                        <AvHour key={h} scope="col" $on={h === 2} $last={h === 7}>{h}</AvHour>
                      ))}
                    </tr>
                  </thead>
                  <tbody>
                    {weekdays.map((d) => (
                      <tr key={d}>
                        <AvDay scope="row" $on={d === "Пт"} $last={d === "Пт"}><DayName>{d}</DayName></AvDay>
                        {hours.map((h) => (
                          <AvCell key={h} $bottom={d === "Пт"} $right={h === 7}>{h > 4 && <Tick />}</AvCell>
                        ))}
                      </tr>
                    ))}
                  </tbody>
                </Availability>
                <AvFooter>
                  <PushButton type="button" $w={126}>Възможности А</PushButton>
                </AvFooter>
              </div>
            </GroupBody>
          </Group>

          <TwoColumns $gap={7}>
            <Group>
              <Legend>Значение на тази връзка между картите:</Legend>
              <GroupBody $top={10} $bottom={8}>
                <IconSlot><IconPlay /></IconSlot>
                <Stack $gap={6} $top={6}>
                  <Picker w={174} value="Нормално" label="Значение" />
                  <FilterLine>
                    <PushButton type="button" $w={114}>Деактивирай</PushButton>
                  </FilterLine>
                </Stack>
              </GroupBody>
            </Group>
            <Group>
              <Legend>Бележка:</Legend>
              <NoteInput aria-label="Бележка" />
            </Group>
          </TwoColumns>

          <TwoColumns $gap={11}>
            <RightSide>
              <PushButton type="button" $w={73} $default>OK</PushButton>
            </RightSide>
            <PushButton type="button" $w={73}>Откажи</PushButton>
          </TwoColumns>
        </AdvancedBody>
      </AdvancedWindow>

      <Marks>
        {boxes.map(([x, y, w, h]) => (
          <MarkBox key={x} $x={x} $y={y} $w={w} $h={h} />
        ))}
        {numbers.map(([n, x, y]) => (
          <MarkNumber key={n} $x={x} $y={y}>{n}</MarkNumber>
        ))}
        <Svg w={800} h={700}>
          <g stroke={red} strokeWidth="2.500" strokeLinecap="round" strokeLinejoin="round">
            <path d="M765 124C773 150 777 172 777 184 774 214 747 228 704 250M710 239l-7 11q11 1 15 7" />
            <path d="M311 667c37 6 62 15 92 11 18-3 30-16 42-25M429 653l17-2-2 13" />
          </g>
        </Svg>
      </Marks>
    </Frame>
  );
}
